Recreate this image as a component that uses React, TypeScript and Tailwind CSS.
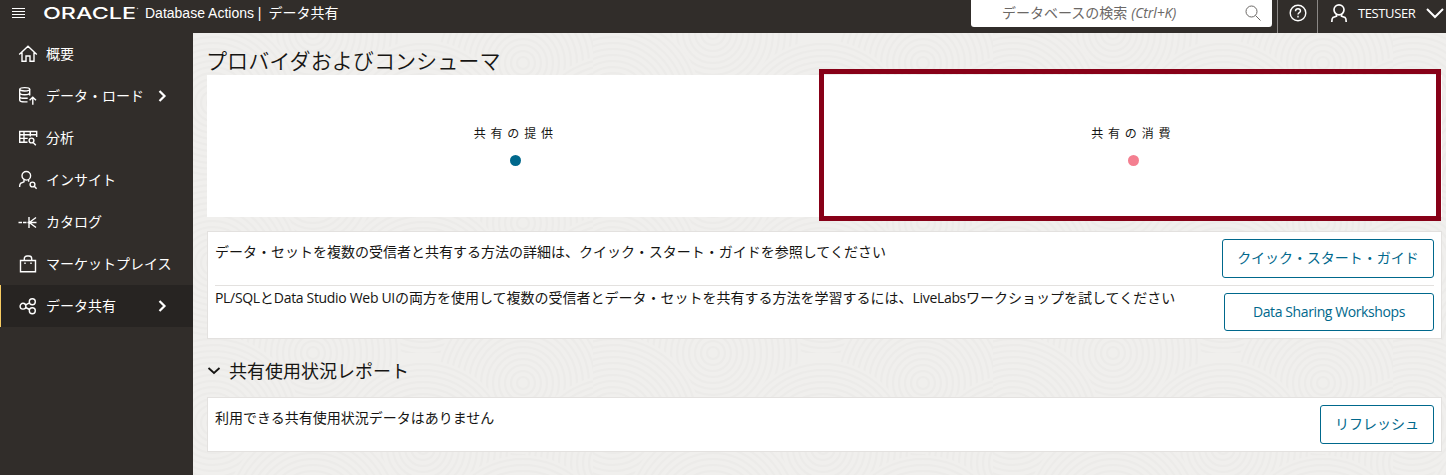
import type { ReactNode } from "react";

function Icon({ children, className = "" }: { children: ReactNode; className?: string }) {
  return (
    <svg
      viewBox="0 0 20 20"
      fill="none"
      stroke="currentColor"
      strokeWidth="1.4"
      className={`h-5 w-5 shrink-0 ${className}`}
    >
      {children}
    </svg>
  );
}

const navItems: { label: string; expandable?: boolean; active?: boolean; icon: ReactNode }[] = [
  {
    label: "概要",
    icon: <path d="M1.2 10.5 10 2.2l8.8 8.3M4 8.500V17.300h4v-5.300h4v5.300h4V8.500" />,
  },
  {
    label: "データ・ロード",
    expandable: true,
    icon: (
      <>
        <ellipse cx="6.700" cy="3.300" rx="5" ry="1.700" />
        <path d="M1.700 3.300v10.700c0 1.200 2.200 1.900 5 1.900h2.800M11.700 3.300v6.200M1.700 6.800c0 1.200 2.200 1.900 5 1.900s5-.7 5-1.900M1.700 10.400c0 1.200 2.200 1.900 5 1.900h3M14.800 18.800v-7.500M11.600 14.300l3.200-3.100 3.200 3.100" />
      </>
    ),
  },
  {
    label: "分析",
    icon: (
      <>
        <path d="M9.500 14.200H1.700V3.500h17V9M1.700 6.700h17M1.700 10.400h8M6 3.500V14.200M12.300 3.500v5" />
        <circle cx="13.500" cy="12.500" r="2.400" />
        <path d="m15.200 14.500 2.600 2.800" />
      </>
    ),
  },
  {
    label: "インサイト",
    icon: (
      <>
        <circle cx="8.300" cy="5.800" r="4.300" />
        <path d="M6 9.500v2.300l-3.500 1.500c-.7 1-.9 2-.9 3.700M10.600 9.500v2.200" />
        <circle cx="14.500" cy="14.500" r="2.400" />
        <path d="m16.300 16.300 2.300 2.500" />
      </>
    ),
  },
  {
    label: "カタログ",
    icon: <path d="M0.500 10.500h3.500M5 10.500h3.500M9.500 10.500h9M11 5v11M11.300 10.500l6.700-5M11.300 10.500l6.700 5" />,
  },
  {
    label: "マーケットプレイス",
    icon: (
      <>
        <path d="M2.500 6.500h15v11.200h-15zM6.300 6.500V4.700c0-1.500 1.200-2.700 2.700-2.700h2c1.500 0 2.700 1.200 2.700 2.700v1.800" />
        <path d="M6.300 9.200h1.400M12.300 9.200h1.400" />
      </>
    ),
  },
  {
    label: "データ共有",
    expandable: true,
    active: true,
    icon: (
      <>
        <circle cx="5" cy="10.200" r="2.900" />
        <circle cx="14.300" cy="5.700" r="3" />
        <circle cx="14.300" cy="14.700" r="3" />
        <path d="m7.600 8.900 4-2M7.600 11.500l4 2" />
      </>
    ),
  },
];

function Header() {
  return (
    <header className="flex h-[33px] items-start bg-[#312d2a] text-white">
      <svg viewBox="0 0 13 12" className="ml-3 mt-[7px] h-3 w-[13px]" stroke="white" shapeRendering="crispEdges">
        <path d="M0 1.500h13M0 4.500h13M0 7.500h13M0 10.500h13" />
      </svg>
      <svg viewBox="0 0 96 16" className="ml-[18px] mt-[5px] h-4 w-24 overflow-visible">
        <text
          x="0"
          y="13.800"
          textLength="93"
          lengthAdjust="spacingAndGlyphs"
          fill="white"
          className="font-['Inter'] text-[16px] font-medium"
        >
          ORACLE
        </text>
        <circle cx="94.500" cy="3.500" r="0.800" fill="#aaa" />
      </svg>
      <div className="ml-1.5 flex whitespace-pre leading-[26px]">
        <span className="font-['Liberation_Sans'] text-[14px]">Database Actions |</span>
        <span className="ml-[7px] text-[14px]">データ共有</span>
      </div>
      <div className="ml-auto flex h-full">
        <div className="flex h-[27px] w-[301px] shrink-0 items-center rounded-b-[3px] bg-white pb-0.5 pl-[31px] text-[#6b6866]">
          <span className="whitespace-pre text-[14px]">データベースの検索</span>
          <span className="ml-1 text-[14px] italic tracking-[-0.100px]">(Ctrl+K)</span>
          <svg viewBox="0 0 16 16" className="ml-auto mr-[11px] h-4 w-4" fill="none" stroke="currentColor">
            <circle cx="6.500" cy="6.500" r="5.500" />
            <path d="m10.500 10.500 5 5" />
          </svg>
        </div>
        <div className="ml-[5px] flex h-full w-[41px] shrink-0 justify-center border-x border-[#8b8886] pt-1">
          <svg viewBox="0 0 18 18" className="h-[18px] w-[18px]" fill="none" stroke="white" strokeWidth="1.400">
            <circle cx="9" cy="9" r="7.800" />
            <path d="M6.500 7.200c0-1.600 1-2.500 2.500-2.500s2.500.9 2.500 2.200c0 1.800-2.500 1.700-2.500 3.600M9 11.800v1.600" />
          </svg>
        </div>
        <svg viewBox="0 0 18 20" className="ml-3 mt-[3px] h-5 w-[18px] shrink-0" fill="none" stroke="white" strokeWidth="1.700">
          <circle cx="9" cy="6.800" r="5" />
          <path d="M6.500 11v2.200l-3.500 1.200C2 15.200 1.800 17 1.800 19M11.500 11v2.200l3.500 1.200c1 .8 1.200 2.600 1.200 4.600" />
        </svg>
        <span className="ml-2.5 w-[68px] shrink-0 whitespace-nowrap text-[13px] leading-[26px] tracking-[-0.400px]">TESTUSER</span>
        <svg viewBox="0 0 20 12" className="mt-[7px] h-3 w-5 shrink-0" fill="none" stroke="white" strokeWidth="2">
          <path d="m1 2 8 8 8-8" />
        </svg>
      </div>
    </header>
  );
}

function Sidebar() {
  return (
    <nav className="w-[193px] shrink-0 bg-[#312d2a] text-white">
      {navItems.map((item) => (
        <div
          key={item.label}
          className={`flex h-[42px] items-center border-l pl-[17px] text-[14px] ${
            item.active ? "border-[#f8cc62] bg-[#272422]" : "border-transparent"
          }`}
        >
          <Icon>{item.icon}</Icon>
          <span className="ml-2 whitespace-nowrap pb-0.5">{item.label}</span>
          {item.expandable && (
            <svg viewBox="0 0 10 12" className="ml-auto mr-[26px] h-3 w-2.5" fill="none" stroke="white" strokeWidth="2.200">
              <path d="m2.500 1 5 5-5 5" />
            </svg>
          )}
        </div>
      ))}
    </nav>
  );
}

const radii = [6, 12, 18, 24, 30, 36, 42, 48, 54, 60, 66, 72, 78, 84];

const ringCenters = [
  [120, 0],
  [330, 30],
  [20, 70],
  [230, 95],
  [420, 110],
  [120, 160],
  [330, 190],
  [20, 230],
  [230, 255],
  [420, 270],
];

function Texture() {
  return (
    <svg className="absolute inset-0 h-full w-full" fill="none" stroke="#ecebe9" strokeWidth="2">
      <defs>
        <pattern id="rings" width="400" height="160" patternUnits="userSpaceOnUse">
          {ringCenters.map(([x, y]) => (
            <g key={`${x}-${y}`}>
              <circle cx={x} cy={y} r="88" fill="#f0efed" stroke="none" />
              {radii.map((r) => (
                <circle key={r} cx={x} cy={y} r={r} />
              ))}
            </g>
          ))}
        </pattern>
      </defs>
      <rect width="100%" height="100%" fill="url(#rings)" stroke="none" />
    </svg>
  );
}

function Button({ children, className }: { children: ReactNode; className: string }) {
  return (
    <button
      className={`flex shrink-0 items-center justify-center whitespace-nowrap rounded-[3px] border border-[#00688c] bg-white text-[14px] text-[#00688c] ${className}`}
    >
      {children}
    </button>
  );
}

function Latin({ children }: { children: ReactNode }) {
  return <span className="tracking-[-0.320px]">{children}</span>;
}

function Share({ label, dot }: { label: string; dot: string }) {
  return (
    <div className="flex flex-1 flex-col items-center pt-[50px]">
      <span className="text-[12px] leading-[18px] tracking-[4.800px]">{label}</span>
      <span className={`mt-3 h-[11px] w-[11px] rounded-full ${dot}`} />
    </div>
  );
}

export default function App() {
  return (
    <div className="h-[475px] overflow-hidden font-['Open_Sans','Noto_Sans_CJK_JP',sans-serif] text-[#161513]">
      <Header />
      <div className="flex h-[442px]">
        <Sidebar />
        <main className="relative min-w-0 flex-1 bg-[#f0efed]">
          <Texture />
          <div className="relative pl-3.5 pr-1">
            <h1 className="-ml-px h-[42px] pt-[13px] text-[21.100px] font-[350] leading-[30px]">プロバイダおよびコンシューマ</h1>
            <section className="relative flex h-[142px] bg-white">
              <Share label="共有の提供" dot="bg-[#00688c]" />
              <Share label="共有の消費" dot="bg-[#f47f90]" />
              <div className="absolute -bottom-1 -top-1.5 left-[612px] right-px border-[5px] border-[#870017]" />
            </section>
            <section className="mt-3.5 h-[108px] border border-[#e3e1df] bg-white px-[7px] text-[14px]">
              <div className="flex h-[54px] justify-between border-b border-[#e3e1df] pt-[7px]">
                <p className="pt-[3px] leading-5">データ・セットを複数の受信者と共有する方法の詳細は、クイック・スタート・ガイドを参照してください</p>
                <Button className="h-[39px] w-[212px] pb-[3px]">クイック・スタート・ガイド</Button>
              </div>
              <div className="flex justify-between pt-[7px]">
                <p className="-mt-[5px] leading-5">
                  <Latin>PL/SQL</Latin>と<Latin>Data Studio Web UI</Latin>
                  の両方を使用して複数の受信者とデータ・セットを共有する方法を学習するには、<Latin>LiveLabs</Latin>
                  ワークショップを試してください
                </p>
                <Button className="h-[38px] w-[210px] pb-px tracking-[-0.400px]">Data Sharing Workshops</Button>
              </div>
            </section>
            <div className="flex h-[58px] items-center pt-1.5">
              <svg viewBox="0 0 14 10" className="h-2.5 w-3.5" fill="none" stroke="currentColor" strokeWidth="1.800">
                <path d="m1.500 2 5.500 5 5.500-5" />
              </svg>
              <h2 className="ml-2 text-[18px] leading-7">共有使用状況レポート</h2>
            </div>
            <section className="flex h-[55px] justify-between border border-[#e3e1df] bg-white px-[7px] pt-[7px] text-[14px]">
              <p className="pt-[3px] leading-5">利用できる共有使用状況データはありません</p>
              <Button className="h-[39px] w-[114px] pb-[3px]">リフレッシュ</Button>
            </section>
          </div>
        </main>
      </div>
    </div>
  );
}
